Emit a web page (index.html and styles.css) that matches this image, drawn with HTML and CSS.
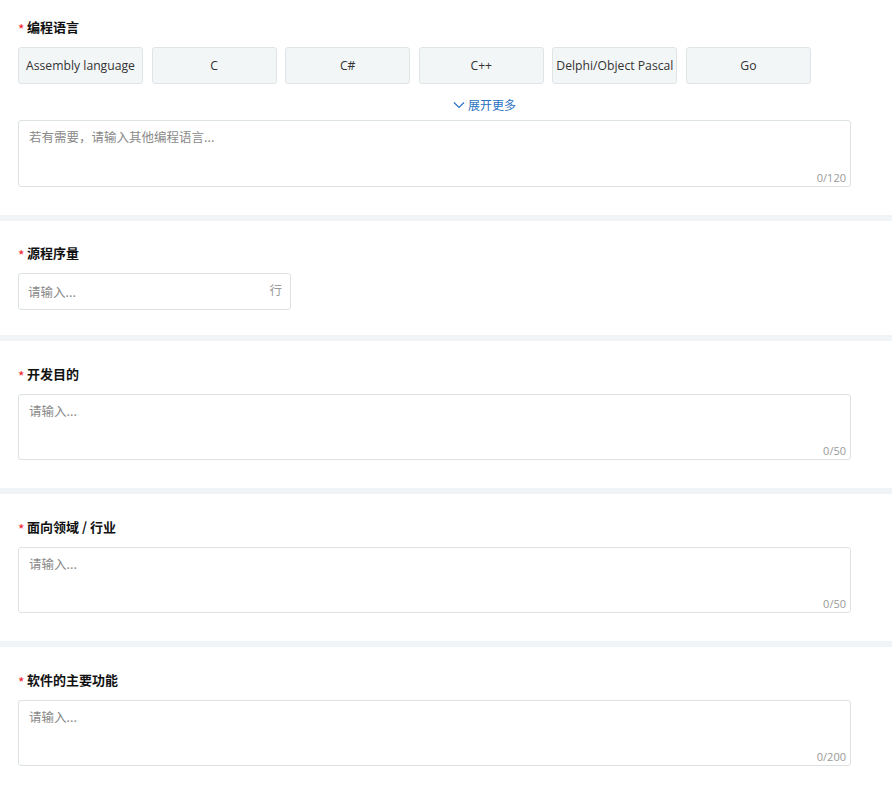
FILE: index.html
```html
<!DOCTYPE html>
<html lang="zh-CN">
<head>
<meta charset="utf-8">
<title>表单</title>
<link rel="stylesheet" href="styles.css">
</head>
<body>
<div class="page">
  <section class="section first">
    <div class="label"><span class="req">*</span>编程语言</div>
    <div class="chips">
      <div class="chip">Assembly language</div>
      <div class="chip">C</div>
      <div class="chip">C#</div>
      <div class="chip">C++</div>
      <div class="chip">Delphi/Object Pascal</div>
      <div class="chip">Go</div>
    </div>
    <div class="more">
      <svg class="chev" width="12" height="8" viewBox="0 0 12 8"><path d="M1 1.5 L6 6.5 L11 1.5" fill="none" stroke="#2a72c2" stroke-width="1.2"/></svg>
      <span>展开更多</span>
    </div>
    <div class="area tall">
      <div class="ph">若有需要，请输入其他编程语言...</div>
      <div class="count">0/120</div>
    </div>
  </section>
  <div class="sep"></div>
  <section class="section short">
    <div class="label"><span class="req">*</span>源程序量</div>
    <div class="input">
      <span class="ph">请输入...</span>
      <span class="unit">行</span>
    </div>
  </section>
  <div class="sep"></div>
  <section class="section">
    <div class="label"><span class="req">*</span>开发目的</div>
    <div class="area">
      <div class="ph">请输入...</div>
      <div class="count">0/50</div>
    </div>
  </section>
  <div class="sep"></div>
  <section class="section">
    <div class="label"><span class="req">*</span>面向领域 / 行业</div>
    <div class="area">
      <div class="ph">请输入...</div>
      <div class="count">0/50</div>
    </div>
  </section>
  <div class="sep"></div>
  <section class="section">
    <div class="label"><span class="req">*</span>软件的主要功能</div>
    <div class="area">
      <div class="ph">请输入...</div>
      <div class="count">0/200</div>
    </div>
  </section>
</div>
</body>
</html>
```

FILE: styles.css
```css
* { box-sizing: border-box; }
html, body { margin: 0; padding: 0; background: #fff; }
body {
  font-family: "Open Sans", "Noto Sans CJK SC", sans-serif;
  color: #333;
  width: 892px;
}
.page { display: flex; flex-direction: column; }
.section {
  padding: 23px 41px 28px 18px;
  display: flex;
  flex-direction: column;
}
.section.first { padding-top: 17px; }
.section.short { padding-top: 22px; padding-bottom: 25px; }
.sep { height: 6px; background: #f1f4f7; }
.label {
  font-family: "Noto Sans CJK SC", sans-serif;
  font-size: 13px;
  font-weight: 700;
  line-height: 20px;
  color: #111;
  display: flex;
  align-items: center;
  margin-bottom: 10px;
}
.req {
  color: #f5222d;
  font-weight: 400;
  font-size: 14px;
  width: 9px;
  line-height: 14px;
  padding-top: 4px;
}
.chips {
  display: flex;
  gap: 8.6px;
}
.chip {
  width: 125px;
  height: 37px;
  flex: none;
  background: #f3f6f7;
  border: 1px solid #dfe4e6;
  border-radius: 3px;
  display: flex;
  align-items: center;
  justify-content: center;
  font-size: 12.2px;
  color: #333;
  white-space: nowrap;
}
.more {
  display: flex;
  align-items: center;
  gap: 3px;
  padding-left: 435px;
  padding-top: 4px;
  height: 36px;
  color: #2a72c2;
  font-family: "Noto Sans CJK SC", sans-serif;
  font-size: 12px;
}
.chev { margin-top: 1px; }
.area {
  height: 66px;
  border: 1px solid #dde2e4;
  border-radius: 3px;
  padding: 7px 10px 0 10px;
  display: flex;
  flex-direction: column;
  justify-content: space-between;
}
.area.tall { height: 67px; }
.ph {
  font-family: "Noto Sans CJK SC", sans-serif;
  font-size: 12.5px;
  color: #8a8a8a;
  line-height: 18px;
}
.count {
  align-self: flex-end;
  font-size: 11px;
  color: #999;
  line-height: 16px;
  margin-right: -6px;
}
.input {
  width: 273px;
  height: 37px;
  border: 1px solid #dde2e4;
  border-radius: 3px;
  display: flex;
  align-items: center;
  justify-content: space-between;
  padding: 0 8px 0 9px;
}
.unit {
  font-family: "Noto Sans CJK SC", sans-serif;
  font-size: 12.5px;
  color: #999;
  margin-top: -4px;
}
```
